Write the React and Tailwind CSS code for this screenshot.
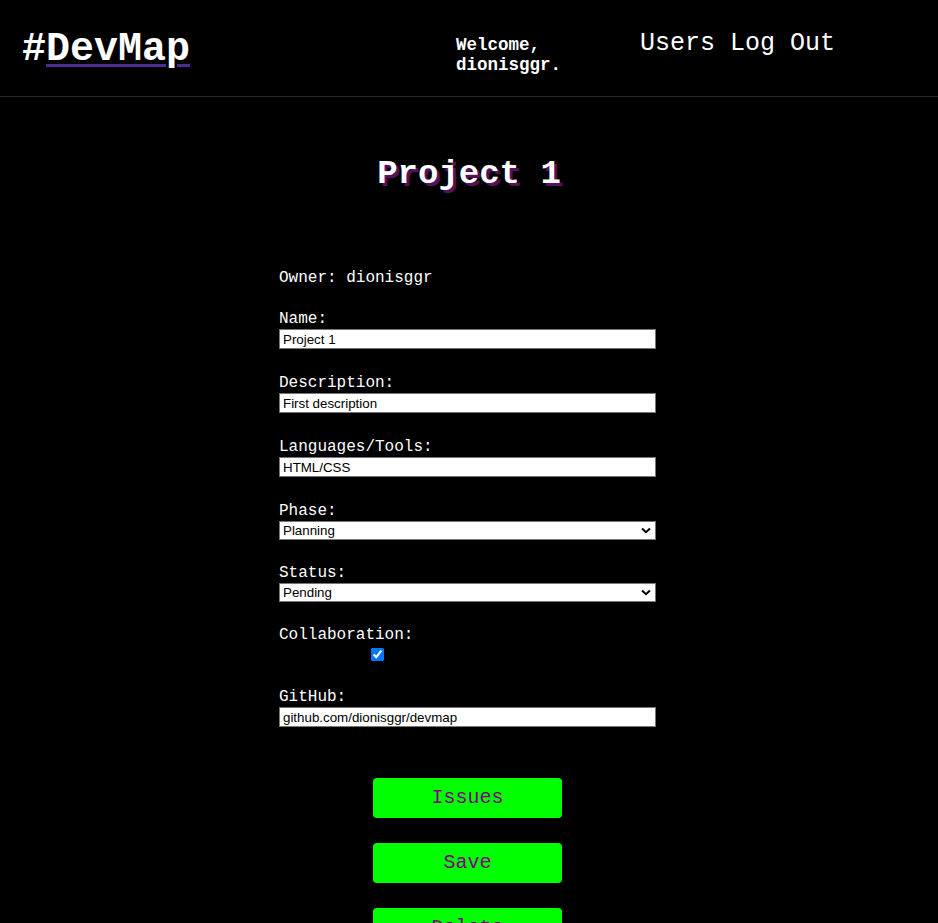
import React, { useState } from "react";

const mono = "font-['Liberation_Mono','Courier_New',monospace]";
const field = "block w-full h-[20px] mt-[1px] bg-white border border-[#767676] px-[3px] text-[13.33px] leading-[18px] text-black font-['Liberation_Sans',Arial,sans-serif] outline-none";

function Chevron() {
  return (
    <svg className="absolute right-[5px] top-[6px] pointer-events-none" width="10" height="7" viewBox="0 0 10 7">
      <path d="M1 1.5 L5 5.2 L9 1.5" fill="none" stroke="#000" strokeWidth="2" />
    </svg>
  );
}

function SelectField({ value, options, onChange }) {
  return (
    <div className="relative mt-[1px]">
      <select value={value} onChange={onChange} className={"appearance-none block w-full h-[19px] bg-white border border-[#767676] pl-[3px] pr-5 text-[13.33px] leading-[17px] text-black font-['Liberation_Sans',Arial,sans-serif] outline-none"}>
        {options.map((o) => (
          <option key={o}>{o}</option>
        ))}
      </select>
      <Chevron />
    </div>
  );
}

export default function App() {
  const [form, setForm] = useState({
    name: "Project 1",
    description: "First description",
    languages: "HTML/CSS",
    phase: "Planning",
    status: "Pending",
    collaboration: true,
    github: "github.com/dionisggr/devmap",
  });

  const update = (e) => {
    const { name, value, type, checked } = e.target;
    setForm((prev) => ({ ...prev, [name]: type === "checkbox" ? checked : value }));
  };

  return (
    <div className={"min-h-screen bg-black text-white " + mono}>
      {/* Header */}
      <header className="h-[97px] border-b border-[#2b2b2b] flex items-start pl-[22px]">
        <div className="w-[434px] mt-[27px]">
          <a href="#" className="text-[40px] leading-[45px] font-bold text-white">
            #<span className="underline decoration-[#4f2a8f] decoration-[3px] underline-offset-[4px]">DevMap</span>
          </a>
        </div>
        <div className="w-[184px] mt-[35px] text-[17.5px] leading-[20px] font-bold">
          <p>Welcome,</p>
          <p>dionisggr.</p>
        </div>
        <nav className="mt-[30px] text-[25px] leading-[28px] whitespace-pre">
          <a href="#">Users</a> <a href="#">Log Out</a>
        </nav>
      </header>

      {/* Title */}
      <h1 className="mt-[58px] text-center text-[34px] leading-[38px] font-bold [text-shadow:3px_3px_0_#55105f]">
        Project 1
      </h1>

      {/* Form */}
      <form className="w-[377px] ml-[279px] mt-[76px] text-[16px] leading-[18px]" onSubmit={(e) => e.preventDefault()}>
        <p>Owner: dionisggr</p>

        <div className="mt-[23px]">
          <label className="block">Name:</label>
          <input name="name" value={form.name} onChange={update} className={field} />
        </div>

        <div className="mt-[25px]">
          <label className="block">Description:</label>
          <input name="description" value={form.description} onChange={update} className={field} />
        </div>

        <div className="mt-[25px]">
          <label className="block">Languages/Tools:</label>
          <input name="languages" value={form.languages} onChange={update} className={field} />
        </div>

        <div className="mt-[25px]">
          <label className="block">Phase:</label>
          <SelectField value={form.phase} onChange={(e) => setForm((p) => ({ ...p, phase: e.target.value }))} options={["Planning", "Design", "Development", "Testing", "Complete"]} />
        </div>

        <div className="mt-[24px]">
          <label className="block">Status:</label>
          <SelectField value={form.status} onChange={(e) => setForm((p) => ({ ...p, status: e.target.value }))} options={["Pending", "In Progress", "Done"]} />
        </div>

        <div className="mt-[24px]">
          <label className="block">Collaboration:</label>
          <input
            type="checkbox"
            name="collaboration"
            checked={form.collaboration}
            onChange={update}
            className="block m-0 mt-[3.5px] ml-[92px] w-[13px] h-[13px]"
          />
        </div>

        <div className="mt-[27.5px]">
          <label className="block">GitHub:</label>
          <input name="github" value={form.github} onChange={update} className={field} />
        </div>

        {/* Buttons */}
        <div className="mt-[50.5px] flex flex-col items-center gap-[25px] pb-10">
          <button type="button" className="w-[189px] h-[40px] rounded-[4px] bg-[#00ff00] text-[#800080] text-[20px]">
            Issues
          </button>
          <button type="submit" className="w-[189px] h-[40px] rounded-[4px] bg-[#00ff00] text-[#800080] text-[20px]">
            Save
          </button>
          <button type="button" className="w-[189px] h-[40px] rounded-[4px] bg-[#00ff00] text-[#800080] text-[20px]">
            Delete
          </button>
        </div>
      </form>
    </div>
  );
}
